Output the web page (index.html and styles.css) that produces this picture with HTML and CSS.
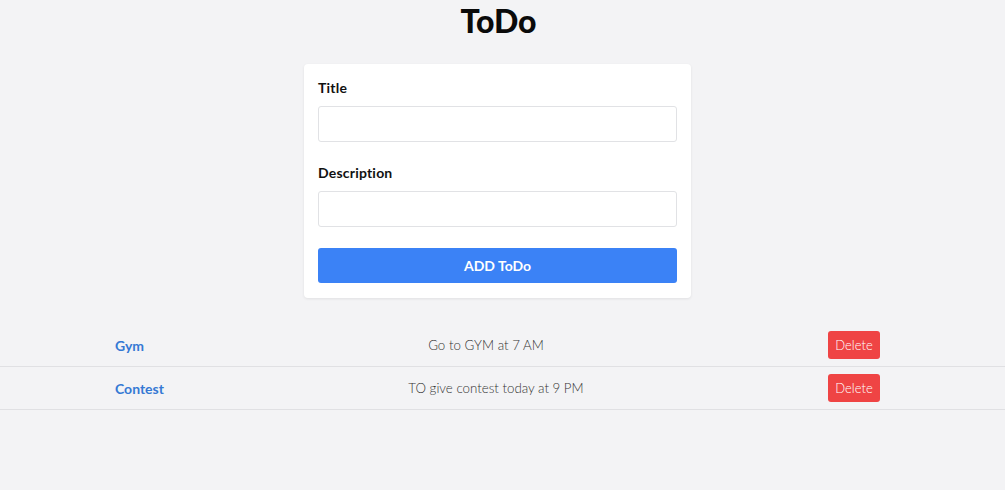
FILE: index.html
```html
<!DOCTYPE html>
<html>
<head>
<meta charset="utf-8">
<link rel="stylesheet" href="styles.css">
</head>
<body>
<h1 class="app-title">ToDo</h1>
<form class="card">
  <label class="field-label">Title</label>
  <input class="field-input" type="text">
  <label class="field-label field-label-second">Description</label>
  <input class="field-input" type="text">
  <button class="add-btn" type="button">ADD ToDo</button>
</form>
<div class="list">
  <div class="row">
    <span class="todo-title">Gym</span>
    <span class="todo-desc">Go to GYM at 7 AM</span>
    <button class="delete-btn" type="button">Delete</button>
  </div>
  <div class="row">
    <span class="todo-title">Contest</span>
    <span class="todo-desc">TO give contest today at 9 PM</span>
    <button class="delete-btn" type="button">Delete</button>
  </div>
</div>
</body>
</html>
```
FILE: styles.css
```css
* { box-sizing: border-box; }
html, body { margin: 0; padding: 0; }
body {
  background: #f3f3f5;
  font-family: Lato, "Open Sans", sans-serif;
  color: #111;
  width: 1005px;
  height: 490px;
  overflow: hidden;
}
.app-title {
  margin: 0;
  padding: 2px 8px 0 0;
  text-align: center;
  font-size: 32px;
  font-weight: 900;
  line-height: 38px;
  color: #0a0a0a;
}
.card {
  width: 387px;
  margin: 24px 0 0 304px;
  background: #fff;
  border-radius: 4px;
  box-shadow: 0 1px 3px rgba(0,0,0,0.08);
  padding: 14px 14px 15px;
  display: flex;
  flex-direction: column;
}
.field-label {
  font-size: 14px;
  font-weight: 700;
  line-height: 20px;
  margin-bottom: 8px;
  color: #111;
  letter-spacing: 0.2px;
}
.field-label-second {
  margin-top: 21px;
}
.field-input {
  height: 36px;
  border: 1px solid #e1e2e5;
  border-radius: 3px;
  background: #fff;
  outline: none;
}
.add-btn {
  margin-top: 21px;
  height: 35px;
  border: none;
  border-radius: 3px;
  background: #3b82f6;
  color: #fff;
  font-family: Lato, "Open Sans", sans-serif;
  font-size: 14px;
  font-weight: 700;
}
.list {
  margin-top: 26px;
}
.row {
  display: flex;
  align-items: center;
  justify-content: space-between;
  height: 43px;
  padding: 0 125px 0 115px;
  border-bottom: 1px solid #e0e0e3;
}
.todo-title {
  color: #3579d4;
  font-weight: 700;
  font-size: 14px;
}
.todo-desc {
  font-size: 13.3px;
  font-weight: 300;
  color: #333;
}
.delete-btn {
  width: 52px;
  height: 28px;
  border: none;
  border-radius: 3px;
  background: #ef4444;
  color: #fff;
  font-family: Lato, "Open Sans", sans-serif;
  font-size: 13px;
  font-weight: 300;
  padding: 0;
}
```
